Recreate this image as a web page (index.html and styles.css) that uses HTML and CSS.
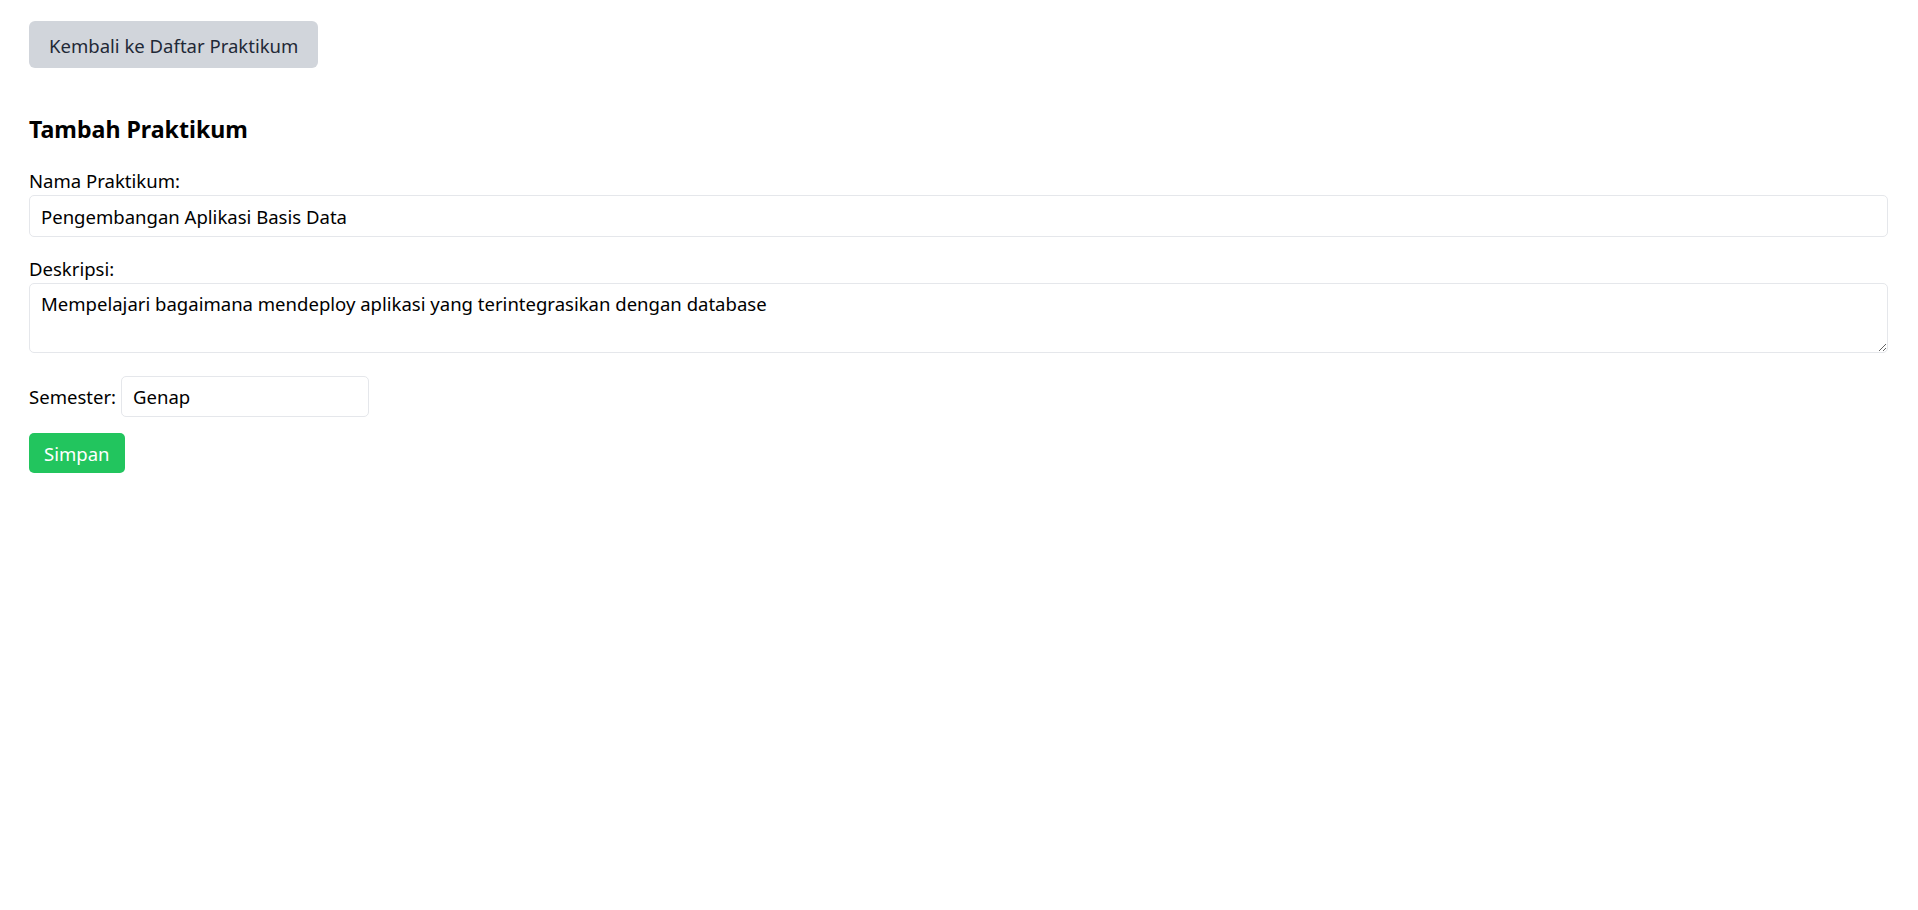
FILE: index.html
```html
<!DOCTYPE html>
<html lang="id">
<head>
<meta charset="utf-8">
<title>Tambah Praktikum</title>
<link rel="stylesheet" href="styles.css">
</head>
<body>
<div class="page">
  <a class="back-btn" href="#">Kembali ke Daftar Praktikum</a>
  <h2 class="title">Tambah Praktikum</h2>
  <form class="form">
    <label class="field-label" for="nama">Nama Praktikum:</label>
    <input class="text-input" id="nama" type="text" value="Pengembangan Aplikasi Basis Data">
    <label class="field-label gap-top" for="desk">Deskripsi:</label>
    <textarea class="text-area" id="desk">Mempelajari bagaimana mendeploy aplikasi yang terintegrasikan dengan database</textarea>
    <div class="semester-row">
      <label class="inline-label" for="sem">Semester:</label>
      <input class="semester-input" id="sem" type="text" value="Genap">
    </div>
    <button class="save-btn" type="button">Simpan</button>
  </form>
</div>
</body>
</html>
```
FILE: styles.css
```css
* { box-sizing: border-box; }
html, body { margin: 0; padding: 0; background: #fff; }
body {
  font-family: "Noto Sans", "Open Sans", sans-serif;
  font-size: 18.55px;
  color: #000;
}
.page {
  padding: 21px 30px 0 29px;
  display: flex;
  flex-direction: column;
  align-items: flex-start;
}
.back-btn {
  display: inline-block;
  height: 47px;
  line-height: 45px;
  padding: 2px 20px 0;
  background: #d1d5db;
  color: #1f2937;
  border-radius: 6px;
  text-decoration: none;
}
.title {
  margin: 44px 0 0;
  font-size: 23.15px;
  line-height: 34px;
  font-weight: 700;
}
.form {
  margin-top: 20px;
  width: 100%;
  display: flex;
  flex-direction: column;
  align-items: stretch;
}
.field-label {
  display: block;
  line-height: 29px;
}
.gap-top { margin-top: 17px; }
.text-input, .text-area, .semester-input {
  font-family: inherit;
  font-size: inherit;
  color: #000;
  border: 1px solid #e5e7eb;
  border-radius: 5px;
  background: #fff;
  outline: none;
}
.text-input {
  height: 42px;
  padding: 0 11px;
}
.text-area {
  height: 70px;
  padding: 7px 11px;
  line-height: 26px;
}
.semester-row {
  margin-top: 23px;
  display: flex;
  align-items: center;
  gap: 5px;
}
.inline-label {
  line-height: 29px;
}
.semester-input {
  width: 248px;
  height: 41px;
  padding: 0 11px;
}
.save-btn {
  align-self: flex-start;
  margin-top: 16px;
  height: 40px;
  padding: 0 15px;
  border: none;
  border-radius: 5px;
  background: #22c55e;
  color: #fff;
  font-family: inherit;
  font-size: inherit;
}
```
